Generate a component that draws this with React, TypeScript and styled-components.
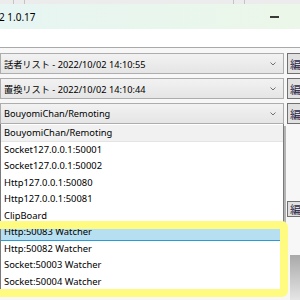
import React from 'react';
import styled, { createGlobalStyle } from 'styled-components';

const GlobalStyle = createGlobalStyle`
  html, body {
    margin: 0;
    padding: 0;
    background: #fff;
    overflow: hidden;
  }
  body {
    font-family: "Noto Sans", "Noto Sans CJK JP", sans-serif;
    font-size: 9.4px;
    color: #000;
  }
`

const Page = styled.div`
  position: relative;
  width: 300px;
  height: 300px;
  overflow: hidden;
  display: flex;
  flex-direction: column;
  & > * {
    flex-shrink: 0;
  }
`

const TabStrip = styled.div`
  height: 4px;
  background: #ececec;
  display: flex;
  flex-direction: row;
`

const TabGap = styled.div<{ w: number }>`
  width: ${p => p.w}px;
  flex: none;
`

const TabLine = styled.div`
  width: 1px;
  background: #c4c4c4;
  flex: none;
`

const TitleBar = styled.div`
  height: 25px;
  display: flex;
  flex-direction: row;
  align-items: center;
  justify-content: space-between;
  background: linear-gradient(to right, #e7f5f3, #ebf7e8);
  font-size: 10px;
`

const TitleText = styled.span`
  margin-left: -1px;
`

const MinimizeGlyph = styled.span`
  width: 9px;
  height: 2px;
  background: #3a3a3a;
  margin-right: 21px;
  margin-top: 1px;
`

const WhiteBand = styled.div`
  height: 18px;
  background: #fff;
  border-bottom: 1px solid #a9a9a9;
`

const Form = styled.div`
  flex: 1;
  background: #f7f7f7;
  padding-top: 5px;
  display: flex;
  flex-direction: column;
  gap: 4px;
  & > * {
    flex-shrink: 0;
  }
`

const Row = styled.div<{ top?: number }>`
  position: relative;
  display: flex;
  flex-direction: row;
  gap: 3px;
  margin-top: ${p => p.top ?? 0}px;
`

const Combo = styled.div`
  width: 284px;
  height: 21px;
  box-sizing: border-box;
  border: 1px solid #adadad;
  background: linear-gradient(#f2f2f2, #e5e5e5);
  display: flex;
  align-items: center;
  justify-content: space-between;
  padding: 0 7px 0 3px;
  flex: none;
`

const ComboText = styled.span`
  white-space: nowrap;
  font-size: 9.2px;
`

const EditButton = styled.div<{ h?: number }>`
  width: 24px;
  height: ${p => p.h ?? 21}px;
  box-sizing: border-box;
  border: 1px solid #707070;
  background: #e1e1e1;
  display: flex;
  align-items: center;
  padding-left: 2px;
  font-size: 11px;
  color: #2a2a4a;
  flex: none;
  overflow: hidden;
  white-space: nowrap;
`

const HiddenPanel = styled.div`
  margin-left: 290px;
  margin-top: 34px;
  height: 50px;
  background: linear-gradient(#a9a9a9, #ececec);
`

const DropList = styled.div`
  position: absolute;
  left: 0;
  top: 21px;
  width: 284px;
  box-sizing: border-box;
  background: #fff;
  border: 1px solid #7a7a7a;
  border-top: 0;
  box-shadow: 2px 2px 0 #b4b4b4;
  padding-top: 1px;
  z-index: 5;
`

const Item = styled.div<{ variant?: 'current' | 'selected' }>`
  height: 16.5px;
  box-sizing: border-box;
  padding-left: 3px;
  display: flex;
  align-items: center;
  white-space: nowrap;
  background: ${p =>
    p.variant === 'current' ? '#f1f1f1' : p.variant === 'selected' ? '#b7dff2' : '#fff'};
  border-bottom: 1px solid
    ${p => (p.variant === 'selected' ? '#2b9ad6' : p.variant === 'current' ? '#e4e4e4' : 'transparent')};
`

const Highlight = styled.div`
  position: absolute;
  left: -10px;
  top: 221px;
  width: 298px;
  height: 76px;
  box-sizing: border-box;
  border: 8px solid #fffb80;
  border-radius: 6px;
  pointer-events: none;
  z-index: 10;
`

const Chevron = () => (
  <svg width="6" height="4" viewBox="0 0 6 4">
    <path d="M0.5 0.5 L3 3 L5.5 0.5" fill="none" stroke="#707070" strokeWidth="1" />
  </svg>
)

const items = [
  'BouyomiChan/Remoting',
  'Socket127.0.0.1:50001',
  'Socket127.0.0.1:50002',
  'Http127.0.0.1:50080',
  'Http127.0.0.1:50081',
  'ClipBoard',
  'Http:50083 Watcher',
  'Http:50082 Watcher',
  'Socket:50003 Watcher',
  'Socket:50004 Watcher',
]

const ComboUI = (props: { text: string }) => (
  <Combo>
    <ComboText>{props.text}</ComboText>
    <Chevron />
  </Combo>
)

export default function App() {
  return (
    <Page>
      <GlobalStyle />
      <TabStrip>
        <TabGap w={13} />
        <TabLine />
        <TabGap w={10} />
        <TabLine />
        <TabGap w={208} />
        <TabLine />
        <TabGap w={10} />
        <TabLine />
      </TabStrip>
      <TitleBar>
        <TitleText>2 1.0.17</TitleText>
        <MinimizeGlyph />
      </TitleBar>
      <WhiteBand />
      <Form>
        <Row>
          <ComboUI text="話者リスト - 2022/10/02 14:10:55" />
          <EditButton>編集</EditButton>
        </Row>
        <Row>
          <ComboUI text="置換リスト - 2022/10/02 14:10:44" />
          <EditButton>編集</EditButton>
        </Row>
        <Row>
          <ComboUI text="BouyomiChan/Remoting" />
          <EditButton>編集</EditButton>
          <DropList>
            {items.map((it, i) => (
              <Item key={it} variant={i === 0 ? 'current' : i === 6 ? 'selected' : undefined}>
                {it}
              </Item>
            ))}
          </DropList>
        </Row>
        <Row top={73}>
          <TabGap w={284} />
          <EditButton h={16}>編集</EditButton>
        </Row>
        <HiddenPanel />
      </Form>
      <Highlight />
    </Page>
  )
}
